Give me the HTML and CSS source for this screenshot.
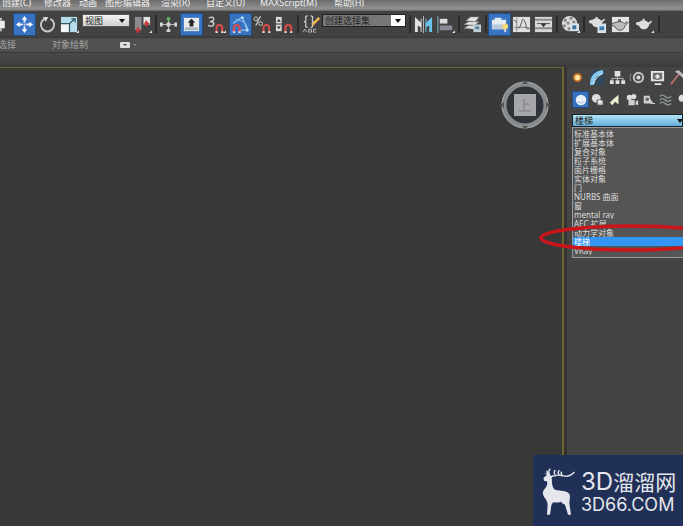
FILE: index.html
```html
<!DOCTYPE html>
<html lang="zh-CN">
<head>
<meta charset="utf-8">
<title>3D</title>
<link rel="stylesheet" href="styles.css">
</head>
<body>
<svg class="defs" aria-hidden="true">
  <defs>
    <g id="magnet"><path d="M10 18V13.500a3 3 0 0 1 6 0V18" fill="none" stroke="#d64c48" stroke-width="2.200"/><path d="M9 17h2.200v2H9zM15 17h2.200v2H15z" fill="#e8e8e8"/></g>
    <g id="flyout"><path d="M17 19l3-3v3z" fill="#e4e4e4"/></g>
    <g id="teapot"><path d="M5 8q4-3 8 0l1 1 3-2 1 1-3 3q-1 4-4 5H8q-3-1-4-4-3 0-3-2t4-2zM8 5h2v2H8z"/></g>
  </defs>
</svg>
<nav class="menu">
  <a href="#">创建(C)</a><a href="#">修改器</a><a href="#">动画</a><a href="#">图形编辑器</a><a href="#">渲染(R)</a><a href="#">自定义(U)</a><a href="#">MAXScript(M)</a><a href="#">帮助(H)</a>
</nav>
<div class="toolbar">
  <button class="cut" aria-label="选择"><svg viewBox="0 0 20 20"><path d="M0 6h5v8H0z" fill="#eee"/><path d="M0 3h2v3H0zM0 14h2v3H0z" fill="#bbb"/></svg></button>
  <button class="on" aria-label="移动"><svg viewBox="0 0 20 20"><path d="M10 1l3 4h-2v3H9V5H7zM10 19l3-4h-2v-3H9v3H7zM1 10l4-3v2h3v2H5v2zM19 10l-4-3v2h-3v2h3v2z" fill="#f3f6fa"/><path d="M9 9h2v2H9z" fill="#d8ecff"/></svg></button>
  <button aria-label="旋转"><svg viewBox="0 0 20 20"><path d="M7 4a7 7 0 1 0 6 0" fill="none" stroke="#c9c9c9" stroke-width="2"/><path d="M5 2l6 0-3 5z" fill="#d8d8d8"/></svg></button>
  <button aria-label="缩放"><svg viewBox="0 0 20 20"><path d="M1 2h17v16H1z" fill="#b7ddec"/><path d="M1 9h9v9H1z" fill="#f4f4f4"/><path d="M1 9h9v9M10 9l6-5M12 4h4v4" fill="none" stroke="#31576b" stroke-width="1.300"/><use href="#flyout"/></svg></button>
  <span class="combo"><select aria-label="参考坐标系"><option>视图</option></select></span>
  <button aria-label="轴心"><svg viewBox="0 0 20 20"><path d="M2 2h7v14H2z" fill="#8b8b8f"/><path d="M11 2h7v8h-7z" fill="#e3e3e3"/><path d="M5 13v6M3 16h5M14 6v6M12 9h5" stroke="#c93434" stroke-width="2"/><use href="#flyout"/></svg></button>
  <i></i>
  <button aria-label="操纵"><svg viewBox="0 0 20 20"><path d="M10 3v14M2 10h16" stroke="#c4c4c4"/><path d="M8 8h4v4H8zM1 8h3v4H1zM16 8h3v4h-3zM8 15h4v3H8z" fill="#d4d4d4"/><circle cx="10" cy="4" r="2" fill="#5ab558"/></svg></button>
  <button class="on" aria-label="键盘快捷键"><svg viewBox="0 0 20 20"><path d="M2 3h16v14H2z" fill="#e9e9e9"/><path d="M3 13h14v3H3z" fill="#a9b6c4"/><path d="M10 4l4 4h-2v4H8V8H6z" fill="#252525"/></svg></button>
  <button aria-label="捕捉"><svg viewBox="0 0 20 20"><path d="M2 3q5-2 5 1t-4 3q5 0 4 3t-6 1" fill="none" stroke="#d0d0d0" stroke-width="1.500"/><use href="#magnet"/><use href="#flyout"/></svg></button>
  <button class="on" aria-label="角度捕捉"><svg viewBox="0 0 20 20"><path d="M2 9L12 2l5 14H9M5 5q11 0 13 11" fill="none" stroke="#8dc0f2" stroke-width="1.300"/><circle cx="12" cy="3" r="1.500" fill="#b8dcff"/><circle cx="17" cy="16" r="1.500" fill="#b8dcff"/><use href="#magnet" x="-7"/></svg></button>
  <button aria-label="百分比捕捉"><svg viewBox="0 0 20 20"><path d="M8 1L3 11" stroke="#d0d0d0" stroke-width="1.300"/><circle cx="3" cy="4" r="2" fill="none" stroke="#d0d0d0"/><circle cx="8" cy="9" r="2" fill="none" stroke="#d0d0d0"/><use href="#magnet" x="1"/></svg></button>
  <button aria-label="微调器捕捉"><svg viewBox="0 0 20 20"><path d="M1 2h6v15H1z" fill="#ddd"/><path d="M2 7l2-3 2 3zM2 12l2 3 2-3zM1 9h6v1H1z" fill="#333"/><use href="#magnet" x="1"/></svg></button>
  <i></i>
  <button aria-label="编辑命名选择集"><svg viewBox="0 0 20 20"><path d="M6 1Q3 1 4 4T2 7q3 0 2 3t2 3M9 1q3 0 2 3t2 3q-3 0-2 3t-2 3" fill="none" stroke="#ccc" stroke-width="1.300"/><path d="M10 10l7-8 2 2-7 7z" fill="#f1b84c"/><path d="M1 18l2-3 2 3M7 15v3h3v-3zM15 15h-3v3h3" fill="none" stroke="#bbb"/></svg></button>
  <span class="combo sets"><select aria-label="命名选择集"><option>创建选择集</option></select></span>
  <i></i>
  <button aria-label="镜像"><svg viewBox="0 0 20 20"><path d="M1 2l6 6V4h1v14H7v-5l-3-2v7H1z" fill="#e1e5e4"/><path d="M19 2l-6 6V4h-1v14h1v-5l3-2v7h3z" fill="#6dc0ea"/><path d="M10 1v18" stroke="#bbb"/></svg></button>
  <button aria-label="对齐"><svg viewBox="0 0 20 20"><path d="M2 1v18" stroke="#7db0d0"/><path d="M4 4h8v5H4z" fill="#ddd"/><path d="M4 11h13v5H4z" fill="#8b8d96"/><use href="#flyout"/></svg></button>
  <i></i>
  <button aria-label="层"><svg viewBox="0 0 20 20"><path d="M1 14l5-3h10l-4 4zM1 10l5-3h11l-5 4zM3 6l5-4h9l-4 5z" fill="#e2e2e2" stroke="#777" stroke-width=".6"/><path d="M11 10h8v8h-8z" fill="#bfd0db"/><path d="M13 12h4v3h-4z" fill="#5c7f98"/></svg></button>
  <i></i>
  <button class="on" aria-label="功能区"><svg viewBox="0 0 20 20"><path d="M2 5h3V3h7v2h5v10H2z" fill="#e5edf4"/><path d="M2 10h15v5H2z" fill="#b7cadb"/><circle cx="16" cy="12" r="3" fill="#f4dc77"/><path d="M15 15h2v3h-2z" fill="#ddd"/></svg></button>
  <button aria-label="曲线编辑器"><svg viewBox="0 0 20 20"><path d="M1 2h18v16H1z" fill="#dfdfdf"/><path d="M5 3v14M2 13h16" stroke="#888"/><path d="M2 5l3 3M6 14q3 0 4-6t3-2 2 7 4 1" fill="none" stroke="#555"/></svg></button>
  <button aria-label="图解视图"><svg viewBox="0 0 20 20"><path d="M1 2h18v16H1z" fill="#d8d8d8"/><path d="M1 5h18M1 14h18" stroke="#8b8b8b" stroke-width="2"/><path d="M3 9h14" stroke="#555"/><path d="M7 9h6l-3 4z" fill="#333"/></svg></button>
  <i></i>
  <button aria-label="材质编辑器"><svg viewBox="0 0 20 20"><circle cx="9" cy="9" r="8" fill="#ddd"/><path d="M3 4h3v3H3zM9 2h3v3H9zM6 7h3v3H6zM12 6h3v3h-3zM2 10h3v3H2zM7 13h3v3H7z" fill="#888"/><path d="M10 9h9v8h-9z" fill="#d7e4ee"/><path d="M12 11h4v4h-4z" fill="#3d6e94"/><use href="#flyout"/></svg></button>
  <i></i>
  <button aria-label="渲染设置"><svg viewBox="0 0 20 20"><use href="#teapot" fill="#ddd" y="-3"/><path d="M10 9h9v10h-9z" fill="#d7e4ee"/><path d="M12 12h5v4h-5z" fill="#3d7eb0"/></svg></button>
  <button aria-label="渲染帧窗口"><svg viewBox="0 0 20 20"><path d="M1 2h18v16H1z" fill="#e4e4e4"/><use href="#teapot" fill="#bbb" stroke="#555"/></svg></button>
  <button aria-label="渲染"><svg viewBox="0 0 20 20"><use href="#teapot" fill="#dedede" y="-1"/><use href="#flyout"/></svg></button>
  <i></i>
</div>
<div class="ribbon"><span>选择</span><span>对象绘制</span><button aria-label="展开"><svg viewBox="0 0 18 8"><rect y="1" width="10" height="6" rx="1" fill="#ddd"/><path d="M3 3h4L5 5z" fill="#444"/><path d="M13 3h3l-1 2z" fill="#999"/></svg></button></div>
<div class="strip"></div>
<main>
  <section class="viewport">
    <svg class="cube" viewBox="0 0 50 50"><circle cx="25" cy="25" r="21" fill="#30343a" stroke="#888b8e" stroke-width="5"/><circle cx="25" cy="25" r="23" fill="none" stroke="#a0a2a4"/><path d="M25 0l3 4h-6zM25 50l3-4h-6zM0 25l4-3v6zM50 25l-4-3v6z" fill="#555"/><path d="M14 14h22v22H14z" fill="#a5a7ab"/><path d="M24 19v12M24 24h5M19 31h12" stroke="#8a8c93" stroke-width="1.500"/></svg>
  </section>
  <aside class="panel">
    <div class="tabs">
      <button aria-label="创建"><svg viewBox="0 0 18 18"><circle cx="9" cy="9" r="5" fill="#b86a24"/><circle cx="9" cy="9" r="3" fill="#ffe2a0"/></svg></button>
      <button aria-label="修改"><svg viewBox="0 0 18 18"><path d="M2 1h14v16H2z" fill="#30465a"/><path d="M3 17C3 9 7 4 15 3" fill="none" stroke="#85c8f3" stroke-width="4"/><path d="M5 16Q6 9 14 5" fill="none" stroke="#fff"/></svg></button>
      <button aria-label="层次"><svg viewBox="0 0 18 18"><path d="M6 2h6v6H6zM1 12h4v4H1zM7 12h4v4H7zM13 12h4v4h-4z" fill="#e0e0e0"/><path d="M9 8v4M3 12v-2h12v2" fill="none" stroke="#bbb"/></svg></button>
      <button aria-label="运动"><svg viewBox="0 0 18 18"><circle cx="10" cy="9" r="5" fill="#555" stroke="#c4c4c4" stroke-width="2"/><circle cx="10" cy="9" r="2" fill="#ddd"/><path d="M2 5q-2 4 0 8" fill="none" stroke="#888"/></svg></button>
      <button aria-label="显示"><svg viewBox="0 0 18 18"><path d="M2 2h14v11H2zM6 15h7v2H6z" fill="#e6e6e6"/><path d="M4 4h10v7H4z" fill="#777"/><circle cx="9" cy="8" r="3" fill="#ddd" stroke="#444"/></svg></button>
      <button aria-label="工具"><svg viewBox="0 0 18 18"><path d="M2 16L11 5" stroke="#b77070" stroke-width="2"/><path d="M6 3l4-2 8 7-2 3-6-6z" fill="#bbb"/></svg></button>
    </div>
    <div class="kinds">
      <button class="on" aria-label="几何体"><svg viewBox="0 0 16 16"><circle cx="8" cy="8" r="6" fill="#e8f0f8"/><path d="M4 10q4 3 8 0" stroke="#9bbad7" fill="none"/></svg></button>
      <button aria-label="图形"><svg viewBox="0 0 16 16"><circle cx="6" cy="6" r="5" fill="#ddd"/><path d="M7 8h7v6H7z" fill="#ccc" stroke="#444"/><circle cx="10" cy="10" r="2" fill="#eee"/></svg></button>
      <button aria-label="灯光"><svg viewBox="0 0 16 16"><path d="M12 2v11L8 10l-3 4-3-3 4-4z" fill="#eeecd0"/></svg></button>
      <button aria-label="摄影机"><svg viewBox="0 0 16 16"><circle cx="5" cy="5" r="3" fill="#ddd"/><circle cx="10" cy="4" r="3" fill="#ddd"/><path d="M4 8h7v6H4zM12 10l3-2v6l-3-1z" fill="#d0d0d0"/></svg></button>
      <button aria-label="辅助对象"><svg viewBox="0 0 16 16"><path d="M2 3h7v3l4 6H2z" fill="#d0d0d0"/><circle cx="6" cy="7" r="2" fill="#666"/><path d="M10 12h5" stroke="#ddd"/></svg></button>
      <button aria-label="空间扭曲"><svg viewBox="0 0 16 16"><path d="M1 4q3-3 6 0t7 0M1 8q3-3 6 0t7 0M1 12q3-3 6 0t7 0" stroke="#8c9c9a" stroke-width="1.500" fill="none"/></svg></button>
      <button aria-label="系统"><svg viewBox="0 0 16 16"><circle cx="7" cy="6" r="4" fill="#ddd"/><circle cx="12" cy="11" r="4" fill="#ccc"/></svg></button>
    </div>
    <div class="category">
      <span class="combo"><select aria-label="对象类别"><option>楼梯</option></select></span>
      <ul role="listbox" aria-label="对象类别列表">
        <li role="option">标准基本体</li><li role="option">扩展基本体</li><li role="option">复合对象</li><li role="option">粒子系统</li><li role="option">面片栅格</li><li role="option">实体对象</li><li role="option">门</li><li role="option">NURBS 曲面</li><li role="option">窗</li><li role="option">mental ray</li><li role="option">AEC 扩展</li><li role="option">动力学对象</li><li role="option" aria-selected="true" class="sel">楼梯</li><li role="option">VRay</li>
      </ul>
      <svg class="ring" viewBox="0 0 184 32"><ellipse cx="92" cy="16" rx="89" ry="12" fill="none" stroke="#cc1518" stroke-width="3.500"/></svg>
    </div>
  </aside>
</main>
<div class="brand">
  <svg viewBox="27 36 108 144"><path d="M31 66l11-9-8-6 14 4 5 4 7 1-4 6 1 14q1 18 12 22l26 4q15 3 16 15-1 12-2 20l5 35h-9l-9-30q-8-3-12-9-12 4-24 2l-5 9-4 28h-9l2-33q-1-9-10-19-8-12-2-21 9-9 11-19l-1-8-8-1z" fill="#e5e7ec"/><path d="M47 57Q40 49 43 44M50 57Q44 46 52 38M49 52l-7-4M56 59Q64 62 76 57L100 61Q115 59 124 48M68 59Q60 50 67 42M78 57Q72 50 79 43M88 58q-6-5-2-11M102 60l10-1" fill="none" stroke="#e5e7ec" stroke-width="4"/></svg>
  <div class="name"><div class="cn"><b>3D</b>溜溜网</div><div class="en">3D66.COM</div></div>
</div>
</body>
</html>
```
FILE: styles.css
```css
* { box-sizing: border-box; }
body {
  margin: 0;
  height: 100vh;
  display: flex;
  flex-direction: column;
  overflow: hidden;
  background: #444;
  color: #ddd;
  font: 9px/12px "Noto Sans", "Noto Sans CJK SC", sans-serif;
}
.defs { position: absolute; width: 0; height: 0; }
button { padding: 0; border: 0; background: none; display: flex; align-items: center; justify-content: center; }
svg { display: block; flex: none; }
.menu {
  flex: none;
  height: 11px;
  padding-left: 2px;
  overflow: hidden;
  display: grid;
  grid-template-columns: 42px 35px 26px 56px 45px 54px 74px 60px;
  grid-template-rows: 9px;
  align-items: end;
  background: linear-gradient(#6c6c6c, #919191 80%, #666);
}
.menu a { color: #f0f0f0; text-decoration: none; white-space: nowrap; }
.toolbar {
  flex: none;
  height: 27px;
  display: grid;
  grid-template-columns: 12px 25px 20px 25px 48px 24px 4px 21px 25px 24px 24px 20px 24px 4px 22px 86px 4px 22px 23px 4px 23px 3px 24px 21px 23px 4px 23px 4px 23px 22px 26px 4px;
  align-items: center;
  background: #424242;
  border-bottom: 1px solid #393939;
}
.toolbar button { justify-self: center; width: 21px; height: 21px; }
.toolbar button.cut { justify-self: start; justify-content: start; width: 12px; overflow: hidden; }
.toolbar svg { width: 19px; height: 19px; }
.toolbar i { width: 2px; height: 18px; justify-self: center; background: #2b2b2b; }
.on, .toolbar .on { background: #3873c2; outline: 1px solid #254c7d; }
.combo { display: block; position: relative; }
.combo::after {
  content: "";
  position: absolute;
  right: 5px;
  top: 5px;
  border: 3px solid transparent;
  border-top: 4px solid #111;
  border-bottom: 0;
  pointer-events: none;
}
.combo select {
  display: block;
  appearance: none;
  width: 100%;
  height: 13px;
  margin: 0;
  padding: 0 2px;
  border: 1px solid #555;
  border-radius: 0;
  background: linear-gradient(#f4f4f4, #cfcfcf);
  color: #222;
  font: 9px/11px "Noto Sans", "Noto Sans CJK SC", sans-serif;
}
.toolbar .combo { align-self: start; margin-top: 3px; }
.sets { margin-right: 2px; }
.sets select { background: linear-gradient(90deg, #777 83%, #fff 83%); border-color: #222; }
.ribbon {
  flex: none;
  height: 14px;
  display: flex;
  align-items: center;
  background: #505050;
  color: #a5a5a5;
  line-height: 14px;
}
.ribbon span:first-child { width: 54px; margin-left: -2px; }
.ribbon span + span { width: 68px; }
.ribbon svg { width: 18px; height: 8px; }
.strip { flex: none; height: 15px; border-top: 1px solid #393939; background: linear-gradient(#494949, #3c3c3c); }
main { flex: 1; min-height: 0; display: flex; background: #343434; }
.viewport {
  flex: 1;
  display: flex;
  justify-content: flex-end;
  align-items: flex-start;
  padding: 12px 12px 0 0;
  background: #383838;
  border: solid #6e642e;
  border-width: 1px 2px 0 0;
}
.cube { width: 50px; height: 50px; }
.panel {
  width: 119px;
  flex: none;
  padding-left: 3px;
  display: flex;
  flex-direction: column;
  background: linear-gradient(90deg, #343434 3px, #444 3px);
}
.tabs { display: flex; height: 20px; gap: 2px; align-items: center; padding-left: 1px; margin-bottom: 2px; overflow: hidden; }
.tabs button { flex: none; width: 18px; height: 18px; }
.tabs svg { width: 17px; height: 17px; }
.kinds { display: flex; height: 21px; gap: 2px; align-items: center; padding-left: 6px; margin-bottom: 4px; overflow: hidden; }
.kinds button { flex: none; width: 15px; height: 15px; }
.kinds svg { width: 14px; height: 14px; }
.category { position: relative; padding-left: 5px; }
.category .combo::after { right: 0; }
.category select { background: linear-gradient(#b5e2f5, #62aed8); border-color: #17222b; }
ul {
  margin: 0;
  padding: 1px 0 2px;
  list-style: none;
  background: #555;
  border: solid #999;
  border-width: 1px 0 1px 1px;
  font-size: 8px;
  line-height: 9px;
}
li { height: 9px; padding-left: 1px; overflow: hidden; white-space: nowrap; }
.sel { background: #3396f5; color: #fff; }
.ring { position: absolute; left: -29px; top: 108px; width: 184px; height: 32px; }
.brand {
  position: absolute;
  right: 0;
  bottom: 0;
  display: flex;
  align-items: center;
  gap: 3px;
  width: 150px;
  height: 71px;
  padding: 2px 0 0 9px;
  background: #213057;
  color: #e5e7ec;
}
.brand svg { width: 36px; height: 48px; }
.cn { font: 21px/26px "Noto Sans CJK SC", sans-serif; white-space: nowrap; }
.cn b { font: 24px/26px Inter, sans-serif; }
.en { font: 18px/20px Inter, sans-serif; }
```
